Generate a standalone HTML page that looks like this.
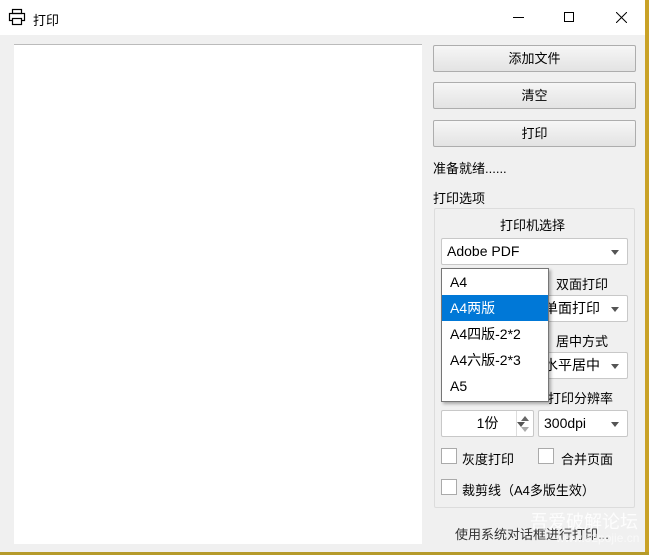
<!DOCTYPE html>
<html><head><meta charset="utf-8"><style>
*{box-sizing:border-box;margin:0;padding:0}
body{width:649px;height:555px;background:#f0f0f0;font-family:"Liberation Sans","Noto Sans CJK SC",sans-serif;font-size:13px;color:#000;position:relative;overflow:hidden}
.a{position:absolute}
.title{left:0;top:0;width:649px;height:35px;background:#fff}
.btn{position:absolute;left:433px;width:203px;height:27px;border:1px solid #adadad;border-radius:2px;background:linear-gradient(#f6f6f6,#e3e3e3);text-align:center;line-height:25px;font-size:13px}
.combo{position:absolute;height:27px;border:1px solid #c8c8c8;border-radius:2px;background:#fff;line-height:25px;padding-left:5px;font-size:14px}
.combo:after{content:"";position:absolute;right:8px;top:11px;border-left:4px solid transparent;border-right:4px solid transparent;border-top:5px solid #555}
.cb{position:absolute;width:16px;height:16px;border:1px solid #aaa;background:#fff}
.lbl{position:absolute;font-size:13px}
</style></head><body>
<div class="a title"></div>
<svg class="a" style="left:8px;top:8px" width="18" height="18" viewBox="0 0 18 18" fill="none" stroke="#000" stroke-width="1.2"><rect x="4.5" y="1.5" width="9" height="4"/><rect x="1.5" y="5.5" width="15" height="7"/><rect x="4.5" y="10.5" width="9" height="6" fill="#fff"/></svg>
<div class="a" style="left:33px;top:10px;font-size:13px">打印</div>
<div class="a" style="left:513px;top:17px;width:11px;height:1px;background:#000"></div>
<div class="a" style="left:564px;top:12px;width:10px;height:10px;border:1px solid #000"></div>
<svg class="a" style="left:616px;top:12px" width="11" height="11"><path d="M0 0L11 11M11 0L0 11" stroke="#000" stroke-width="1"/></svg>
<div class="a" style="left:645px;top:0;width:4px;height:555px;background:#c9a227"></div>
<div class="a" style="left:0;top:552px;width:649px;height:3px;background:#b59a2a"></div>
<div class="a" style="left:14px;top:44px;width:408px;height:500px;background:#fff;border-top:1px solid #bbb"></div>
<div class="btn" style="top:45px">添加文件</div>
<div class="btn" style="top:82px">清空</div>
<div class="btn" style="top:120px">打印</div>
<div class="lbl" style="left:433px;top:158px">准备就绪......</div>
<div class="lbl" style="left:433px;top:188px">打印选项</div>
<div class="a" style="left:434px;top:208px;width:201px;height:300px;border:1px solid #dcdcdc;border-radius:2px"></div>
<div class="lbl" style="left:500px;top:215px">打印机选择</div>
<div class="combo" style="left:441px;top:238px;width:187px">Adobe PDF</div>
<div class="lbl" style="left:556px;top:274px">双面打印</div>
<div class="combo" style="left:538px;top:295px;width:90px">单面打印</div>
<div class="lbl" style="left:556px;top:331px">居中方式</div>
<div class="combo" style="left:538px;top:352px;width:90px">水平居中</div>
<div class="lbl" style="left:548px;top:388px">打印分辨率</div>
<div class="combo" style="left:441px;top:410px;width:93px;text-align:center;padding-left:0">1份</div>
<div class="a" style="left:516px;top:411px;width:1px;height:25px;background:#ddd"></div>
<div class="a" style="left:521px;top:416px;border-left:4px solid transparent;border-right:4px solid transparent;border-bottom:5px solid #666"></div>
<div class="a" style="left:521px;top:427px;border-left:4px solid transparent;border-right:4px solid transparent;border-top:5px solid #aaa"></div>
<div class="combo" style="left:538px;top:410px;width:90px">300dpi</div>
<div class="cb" style="left:441px;top:448px"></div><div class="lbl" style="left:462px;top:449px">灰度打印</div>
<div class="cb" style="left:538px;top:448px"></div><div class="lbl" style="left:561px;top:449px">合并页面</div>
<div class="cb" style="left:441px;top:479px"></div><div class="lbl" style="left:462px;top:480px">裁剪线（A4多版生效）</div>
<div class="lbl" style="left:455px;top:524px;color:#333">使用系统对话框进行打印...</div>
<div class="a" style="left:530px;top:508px;font-size:18px;color:rgba(255,255,255,.85)">吾爱破解论坛</div>
<div class="a" style="left:556px;top:531px;font-size:12px;color:rgba(255,255,255,.6)">www.52pojie.cn</div>
<div class="a" style="left:441px;top:268px;width:108px;height:134px;background:#fff;border:1px solid #767676;box-shadow:2px 2px 3px rgba(0,0,0,.3);font-size:14px">
<div style="height:26px;line-height:26px;padding-left:8px">A4</div>
<div style="height:26px;line-height:26px;padding-left:8px;background:#0078d7;color:#fff">A4两版</div>
<div style="height:26px;line-height:26px;padding-left:8px">A4四版-2*2</div>
<div style="height:26px;line-height:26px;padding-left:8px">A4六版-2*3</div>
<div style="height:26px;line-height:26px;padding-left:8px">A5</div>
</div>
</body></html>
